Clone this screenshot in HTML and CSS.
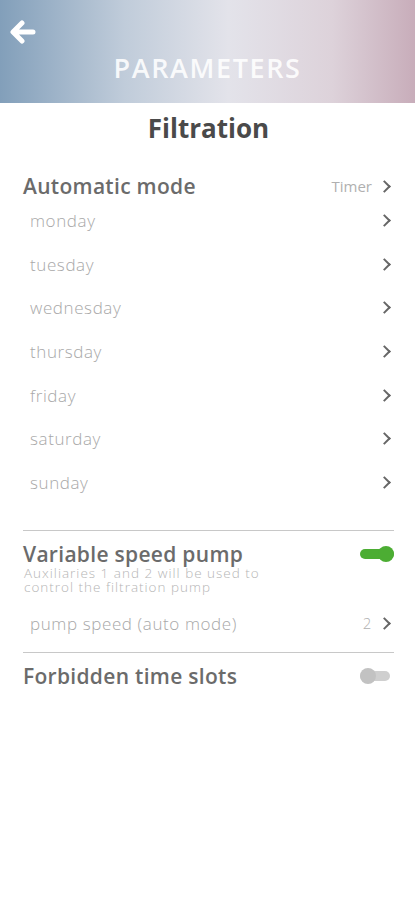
FILE: index.html
```html
<!DOCTYPE html>
<html lang="en">
<head>
    <meta charset="UTF-8">
    <meta name="viewport" content="width=device-width, initial-scale=1.0">
    <title>Parameters</title>
    <link rel="stylesheet" href="styles.css">
</head>
<body>
    <header class="topbar">
        <a class="back" href="#">
            <svg width="26" height="24" viewBox="0 0 26 24">
                <path d="M12 3 L3 12 L12 21 M4 12 H23" fill="none" stroke="#fff" stroke-width="5" stroke-linecap="round" stroke-linejoin="round"/>
            </svg>
        </a>
        <h1>PARAMETERS</h1>
    </header>

    <main class="page">
        <h2>Filtration</h2>

        <div class="row head">
            <span class="title">Automatic mode</span>
            <span class="value">Timer <i class="chev"></i></span>
        </div>
        <div class="days">
            <div class="row day"><span>monday</span><i class="chev"></i></div>
            <div class="row day"><span>tuesday</span><i class="chev"></i></div>
            <div class="row day"><span>wednesday</span><i class="chev"></i></div>
            <div class="row day"><span>thursday</span><i class="chev"></i></div>
            <div class="row day"><span>friday</span><i class="chev"></i></div>
            <div class="row day"><span>saturday</span><i class="chev"></i></div>
            <div class="row day"><span>sunday</span><i class="chev"></i></div>
        </div>

        <hr>

        <div class="row head">
            <span class="title">Variable speed pump</span>
            <span class="toggle on"></span>
        </div>
        <p class="note">Auxiliaries 1 and 2 will be used to<br>control the filtration pump</p>
        <div class="row day speed">
            <span>pump speed (auto mode)</span>
            <span class="value">2 <i class="chev"></i></span>
        </div>

        <hr>

        <div class="row head">
            <span class="title">Forbidden time slots</span>
            <span class="toggle"></span>
        </div>
    </main>
</body>
</html>
```

FILE: styles.css
```css
body {
    margin: 0;
    font-family: "Open Sans", Lato, sans-serif;
    background: #fff;
    color: #666;
}
.topbar {
    position: relative;
    height: 103px;
    background: linear-gradient(90deg, #829fba 0%, #c0ccda 30%, #e3e3ea 55%, #ddd2da 80%, #c8adba 100%);
}
.topbar h1 {
    margin: 0;
    padding-top: 50px;
    text-align: center;
    color: rgba(255, 255, 255, 0.88);
    font-size: 27px;
    font-weight: 600;
    letter-spacing: 1.6px;
    line-height: 36px;
}
.back {
    position: absolute;
    left: 10px;
    top: 20px;
}
.page {
    padding: 0 21px 0 23px;
}
h2 {
    margin: 9px 0 0;
    text-align: center;
    font-size: 26px;
    font-weight: 700;
    color: #4a4a4a;
    line-height: 32px;
}
.row {
    display: flex;
    justify-content: space-between;
    align-items: center;
}
.head {
    height: 26px;
}
.head .title {
    font-size: 21px;
    font-weight: 600;
    color: #6b6b6b;
    letter-spacing: 0.3px;
}
h2 + .head {
    margin-top: 29px;
}
.value {
    display: flex;
    align-items: center;
    gap: 8px;
    color: #b0b0b0;
    font-size: 15px;
}
.chev {
    display: inline-block;
    width: 7px;
    height: 7px;
    border-top: 2.5px solid #666;
    border-right: 2.5px solid #666;
    transform: rotate(45deg);
    margin-right: 5px;
}
.days {
    margin-top: 0;
}
.day {
    height: 43.6px;
    padding-left: 7px;
    font-size: 17px;
    font-weight: 300;
    color: #a8a8a8;
    letter-spacing: 0.6px;
}
hr {
    border: 0;
    border-top: 1px solid #c8c8c8;
    margin: 26px 0 10px;
}
.note {
    margin: 0 0 0 1px;
    font-size: 13.5px;
    font-weight: 300;
    line-height: 13.5px;
    letter-spacing: 1px;
    color: #b5b5b5;
}
.speed {
    height: 46px;
    margin-top: 6px;
}
.speed + hr {
    margin-top: 6px;
    margin-bottom: 10px;
}
.toggle {
    position: relative;
    width: 34px;
    height: 16px;
}
.toggle::before {
    content: "";
    position: absolute;
    left: 0;
    right: 4px;
    top: 3px;
    height: 10px;
    border-radius: 5px;
    background: #cfcfcf;
}
.toggle::after {
    content: "";
    position: absolute;
    left: 0;
    top: 0;
    width: 16px;
    height: 16px;
    border-radius: 50%;
    background: #c2c2c2;
}
.toggle.on::before {
    left: 0;
    right: 0;
    background: #4cad33;
}
.toggle.on::after {
    left: auto;
    right: 0;
    background: #4cad33;
}
```
